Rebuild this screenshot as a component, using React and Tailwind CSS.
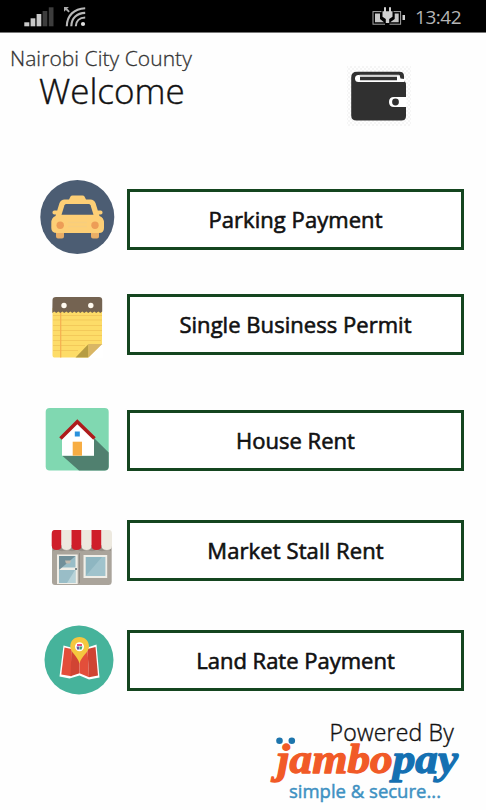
function SignalIcon() {
  return (
    <svg className="block h-[32px] w-[100px]" viewBox="0 0 100 32">
      <g fill="#c9c9c9">
        <rect x="24.3" y="22.3" width="5" height="4" />
        <rect x="30.6" y="18.3" width="4.7" height="8" />
        <rect x="36.6" y="14" width="4.7" height="12.3" />
      </g>
      <g fill="#3d3d3d">
        <rect x="42.6" y="11" width="4.7" height="15.3" />
        <rect x="48.8" y="7.3" width="4.7" height="19" />
      </g>
      <g fill="none" stroke="#b8b8b8" strokeWidth="2.1">
        <path d="M66.8 26.2C67 15.5 74 8.700 85.200 8.200" />
        <path d="M71.300 26.200C71.500 18 77 13.200 85.200 12.900" />
        <path d="M75.800 26.200C76 21 79.500 17.600 85.200 17.500" />
      </g>
      <circle cx="83" cy="24" r="2.100" fill="#e0e0e0" />
      <path d="M64 7h5l-1.800 1.600 2.600 2.700-1.300 1.300-2.600-2.700L64 11.800z" fill="#aaa" />
    </svg>
  );
}

function BatteryIcon() {
  return (
    <svg className="block h-[32px] w-[36px]" viewBox="370 0 36 32">
      <rect x="373" y="11.600" width="27.600" height="12.600" fill="none" stroke="#a5a5a5" strokeWidth="1" />
      <path d="M375 13.500h5v5.500l4 3.200h-9zM398.700 13.500h-4v5.500l-4.500 3.200h8.500z" fill="#c8c8c8" />
      <path d="M381.500 10h12v8.500l-4 3v4h-4.500v-4l-3.500-3z" fill="#000" />
      <path d="M384 7.300h2v4h3v-4h2v4h1.500v5.500l-3.300 2.200v4h-3.400v-4l-3.300-2.200v-5.500h1.500z" fill="#cfcfcf" />
      <rect x="402.500" y="15" width="2.500" height="5" fill="#d0d0d0" />
    </svg>
  );
}

function WalletIcon() {
  return (
    <svg className="block h-[60px] w-[64px]" viewBox="347 66 64 60">
      <defs>
        <pattern id="weave" width="4" height="4" patternUnits="userSpaceOnUse">
          <path d="M0 0h2v2H0zM2 2h2v2H2z" fill="#f5f5f5" />
        </pattern>
      </defs>
      <rect x="347" y="66" width="64" height="60" fill="url(#weave)" />
      <path d="M357 71.700H399.500Q404 71.700 404 76V80.500Q406 82 406 85.500V116Q406 120.500 401.500 120.500H356.500Q351.200 120.500 351.200 115.500V77.500Q351.200 71.700 357 71.700Z" fill="#303030" />
      <path d="M358.500 75H399.500L400.500 78.500L404.500 79V82H358.500Q355 82 355 78.500T358.500 75Z" fill="#fff" />
      <path d="M360 76.700H397V80.200H360Z" fill="#303030" />
      <path d="M359.500 75.300H399" stroke="#d4d4d4" strokeWidth="1.200" />
      <path d="M406.500 97H394Q389 97 389 102T394 107H406.500Z" fill="#fff" />
      <circle cx="395.500" cy="102" r="3.400" fill="#303030" />
    </svg>
  );
}

function TaxiIcon() {
  return (
    <svg className="block h-[90px] w-[90px] shrink-0" viewBox="37 175 90 90">
      <circle cx="77.300" cy="217" r="37" fill="#4c5d73" />
      <path d="M56 231h8v5.500q0 2-2 2h-4q-2 0-2-2zM91 231h8v5.500q0 2-2 2h-4q-2 0-2-2z" fill="#e9ae66" />
      <path d="M59.500 203Q61 199.500 64.500 199.500H69L70.500 196.500Q71 195.500 72.500 195.500H82.500Q84 195.500 84.500 196.500L86 199.500H90.500Q94 199.500 95.500 203L99.500 216Q104 217.500 104 223V228Q104 233 99 233H57Q51.300 233 51.300 228V223Q51.300 217.500 55.500 216Z" fill="#fdcf76" />
      <path d="M64.500 205.300Q65 204 66.500 204H88.500Q90 204 90.500 205.300L93.500 214.700H61.500Z" fill="#4c5d73" />
      <circle cx="60.200" cy="225.300" r="3.700" fill="#ed9d57" />
      <circle cx="95" cy="225.300" r="3.700" fill="#ed9d57" />
      <path d="M68 222.500h19M68 226.500h19" stroke="#f7cd7e" strokeWidth="1.500" />
      <rect x="52.500" y="210.500" width="6" height="4" rx="1.800" fill="#fdcf76" />
      <rect x="96.500" y="210.500" width="6" height="4" rx="1.800" fill="#fdcf76" />
    </svg>
  );
}

function NotepadIcon() {
  return (
    <svg className="block h-[80px] w-[90px] shrink-0" viewBox="37 285 90 80">
      <path d="M52.500 308H102V344L88 357.600H55Q52.500 357.600 52.500 355Z" fill="#fddc68" />
      <path d="M53 315.500h49M53 320h49M53 325.500h49M53 330.500h49M53 335.500h49M53 340.500h48M53 345.500h32M53 350.500h25" stroke="#f3c95a" strokeWidth="1" />
      <path d="M60.700 311v46.500" stroke="#f5b050" strokeWidth="1.200" />
      <path d="M52.500 300Q52.500 297 56 297H99Q102.200 297 102.200 300V311.500l-1.900 1.500-2-1.500-2 1.500-2-1.500-2 1.500-2-1.500-2 1.500-2-1.500-2 1.500-2-1.500-2 1.500-2-1.500-2 1.500-2-1.500-2 1.500-2-1.500-2 1.500-2-1.500-2 1.500-2-1.500-2 1.500-2-1.500-2 1.500-2-1.500-2 1.500Z" fill="#746351" />
      <circle cx="64" cy="305.500" r="2.700" fill="#fffaf0" />
      <circle cx="90.800" cy="305.500" r="2.700" fill="#fffaf0" />
      <path d="M75.500 357.600L88.500 344V357.600Z" fill="#b69c43" />
      <path d="M88.500 344H102.500L88.500 357.700Z" fill="#d9b665" />
      <path d="M102.500 344L88.300 358H102.500Z" fill="#fff" />
    </svg>
  );
}

function HouseIcon() {
  return (
    <svg className="block h-[80px] w-[90px] shrink-0" viewBox="37 400 90 80">
      <rect x="45.700" y="408" width="63" height="62.500" rx="4" fill="#80d8b1" />
      <path d="M94 438L108.700 452.500V466.500Q108.700 470.500 104.500 470.500H79L62 455.500H94Z" fill="#50806f" />
      <path d="M62 437L77.500 422L94 437V455.700H62Z" fill="#fff" />
      <path d="M60.500 438.500L77.300 421.800L94.500 438.500" fill="none" stroke="#af1b1b" strokeWidth="3.600" />
      <rect x="74.800" y="431.500" width="5" height="5" fill="#2a91dc" />
      <rect x="72.700" y="441.700" width="9.300" height="14" fill="#f7ad43" />
    </svg>
  );
}

function StallIcon() {
  return (
    <svg className="block h-[80px] w-[90px] shrink-0" viewBox="37 515 90 80">
      <path d="M52 545H111.700V581.500Q111.700 585 108.500 585H55Q52 585 52 582Z" fill="#aaa49b" />
      <path d="M57 549.500Q62 553 67 549.500Q72 553 77 549.500Q82 553 87 549.500Q92 553 97 549.500Q102 553 107 549.500L111 551V545H53V551Z" fill="#958f87" />
      <path d="M54.500 530H61.500V545.500Q61.500 550 56.700 550T51.700 545.500V534Q51.700 530 54.500 530Z" fill="#cf1e2a" />
      <path d="M61.500 530h10v15.500q0 4.500-5 4.500t-5-4.500z" fill="#ede9df" />
      <path d="M71.500 530h10v15.500q0 4.500-5 4.500t-5-4.500z" fill="#cf1e2a" />
      <path d="M81.500 530h10v15.500q0 4.500-5 4.500t-5-4.500z" fill="#ede9df" />
      <path d="M91.500 530h10v15.500q0 4.500-5 4.500t-5-4.500z" fill="#cf1e2a" />
      <path d="M101.500 530h7.500q3 0 3 4v11.500q0 4.500-5.200 4.500t-5.300-4.500z" fill="#ede9df" />
      <rect x="57" y="554.500" width="20.700" height="29.500" fill="#f0eee7" />
      <path d="M59 556h16.500v11.500H59zM59 570h16.500v13H59z" fill="#99bdc7" />
      <path d="M59 556h16.500L59 570z" fill="#718f99" />
      <path d="M75 570v13h-8z" fill="#b8d3d9" />
      <path d="M65 560.500h6l-1 3h-4z" fill="#c2bbb0" />
      <circle cx="76" cy="569" r="1" fill="#55666c" />
      <rect x="83.500" y="555" width="23.700" height="23" fill="#f0eee7" />
      <rect x="85.700" y="557" width="19.500" height="19" fill="#8eb6c1" />
      <path d="M102 557h3.200v19H85.700z" fill="#a0c3cc" />
      <path d="M79.500 553v30" stroke="#928c84" strokeWidth="1" />
    </svg>
  );
}

function MapIcon() {
  return (
    <svg className="block h-[80px] w-[90px] shrink-0" viewBox="37 620 90 80">
      <circle cx="79" cy="660" r="34.500" fill="#46b39b" />
      <path d="M63.500 645.500L71 647.500L79.500 645L87.500 647.500L96.500 644.500L99.500 677.500L89 679.500L79.500 675.500L69.500 678.500L59.500 676.500Z" fill="#fff" />
      <path d="M64.500 647.500L71.500 649V676.200L61.300 674.500Z" fill="#e34e3a" />
      <path d="M71.500 649L79.500 646.500V673.300L70.500 676.200Z" fill="#d14433" />
      <path d="M79.500 646.500L87.500 649L89 677.200L79.500 673.300Z" fill="#e34e3a" />
      <path d="M87.500 649L95.500 647L98 675.500L89 677.200Z" fill="#cf4433" />
      <path d="M79.500 637C74 637 70.300 641.200 70.300 646.300C70.300 652.500 77.500 656 79.500 663.500C81.500 656 89 652.500 89 646.300C89 641.200 85 637 79.500 637Z" fill="#f5c73f" />
      <circle cx="79.500" cy="646.700" r="4.500" fill="#fff" />
      <path d="M77 644h5v2h-5z" fill="#e94f81" />
      <path d="M76.500 646.500h2.700v3h-2z" fill="#5f56a5" />
      <path d="M79.500 646.500h3l-1 3h-2z" fill="#45a86c" />
    </svg>
  );
}

function JambopayLogo() {
  return (
    <svg className="block h-[75px] w-[206px]" viewBox="260 735 206 75">
      <circle cx="279.500" cy="740.800" r="3.300" fill="#1d75ad" />
      <circle cx="291.800" cy="740.800" r="3.300" fill="#1d75ad" />
      <text x="277" y="772.500" fontSize="42" fontWeight="700" fontStyle="italic" fontFamily="'Liberation Serif', serif" textLength="181" lengthAdjust="spacingAndGlyphs" strokeWidth="1.300" strokeLinejoin="round">
        <tspan fill="#f15a27" stroke="#f15a27">jambo</tspan><tspan fill="#1470b2" stroke="#1470b2">pay</tspan>
      </text>
      <text x="289" y="797.500" fontSize="19" fontFamily="'Open Sans', sans-serif" fill="#3e91c2" stroke="#3e91c2" strokeWidth=".5" textLength="152" lengthAdjust="spacingAndGlyphs">
        simple &amp; secure...
      </text>
    </svg>
  );
}

const rows = [
  { label: "Parking Payment", Icon: TaxiIcon, row: "h-[90px]", button: "mt-[14px]", text: "tracking-[0.06px]" },
  { label: "Single Business Permit", Icon: NotepadIcon, row: "mt-5 h-20", button: "mt-[9px]", text: "tracking-[0.04px]" },
  { label: "House Rent", Icon: HouseIcon, row: "mt-[35px] h-20", button: "mt-[10px]", text: "tracking-normal" },
  { label: "Market Stall Rent", Icon: StallIcon, row: "mt-[35px] h-20", button: "mt-[5px]", text: "tracking-[0.1px]" },
  { label: "Land Rate Payment", Icon: MapIcon, row: "mt-[25px] h-20", button: "mt-[10px]", text: "tracking-normal" },
];

export default function App() {
  return (
    <div className="flex h-[810px] w-[486px] flex-col overflow-hidden bg-[#fefefe] font-['Open_Sans',sans-serif] text-[#111]">
      <div className="flex h-8 shrink-0 justify-between bg-black">
        <SignalIcon />
        <div className="flex pr-[25px]">
          <BatteryIcon />
          <span className="ml-[9px] mt-px text-[19px] leading-8 tracking-[-0.5px] text-[#b5b5b5]">13:42</span>
        </div>
      </div>
      <header className="flex h-[143px] shrink-0 justify-between border-t border-[#777] pr-[75px]">
        <div className="pl-[10px] pt-[10px]">
          <p className="whitespace-nowrap text-[21px] font-light leading-[30px] tracking-[0.05px] text-[#333] [-webkit-text-stroke:0.3px_#333]">Nairobi City County</p>
          <h1 className="-mt-[4px] pl-[29px] text-[35px] font-light leading-[44px] [-webkit-text-stroke:0.4px_#111]">Welcome</h1>
        </div>
        <div className="pt-[33px]">
          <WalletIcon />
        </div>
      </header>
      <main className="shrink-0 pl-[37px]">
        {rows.map(({ label, Icon, row, button, text }) => (
          <div key={label} className={`flex items-start ${row}`}>
            <Icon />
            <button className={`flex h-[61px] w-[337px] items-center justify-center border-[3px] border-[#14451f] bg-white pb-px ${button}`}>
              <span className={`whitespace-nowrap text-[22px] font-medium leading-8 [-webkit-text-stroke:0.6px_#111] ${text}`}>{label}</span>
            </button>
          </div>
        ))}
      </main>
      <footer className="flex flex-1 flex-col items-end">
        <p className="mt-[16px] pr-[32px] text-[23px] font-light leading-8 tracking-[0.2px] [-webkit-text-stroke:0.4px_#111]">Powered By</p>
        <div className="-mt-[13px] pr-[20px]">
          <JambopayLogo />
        </div>
      </footer>
    </div>
  );
}
